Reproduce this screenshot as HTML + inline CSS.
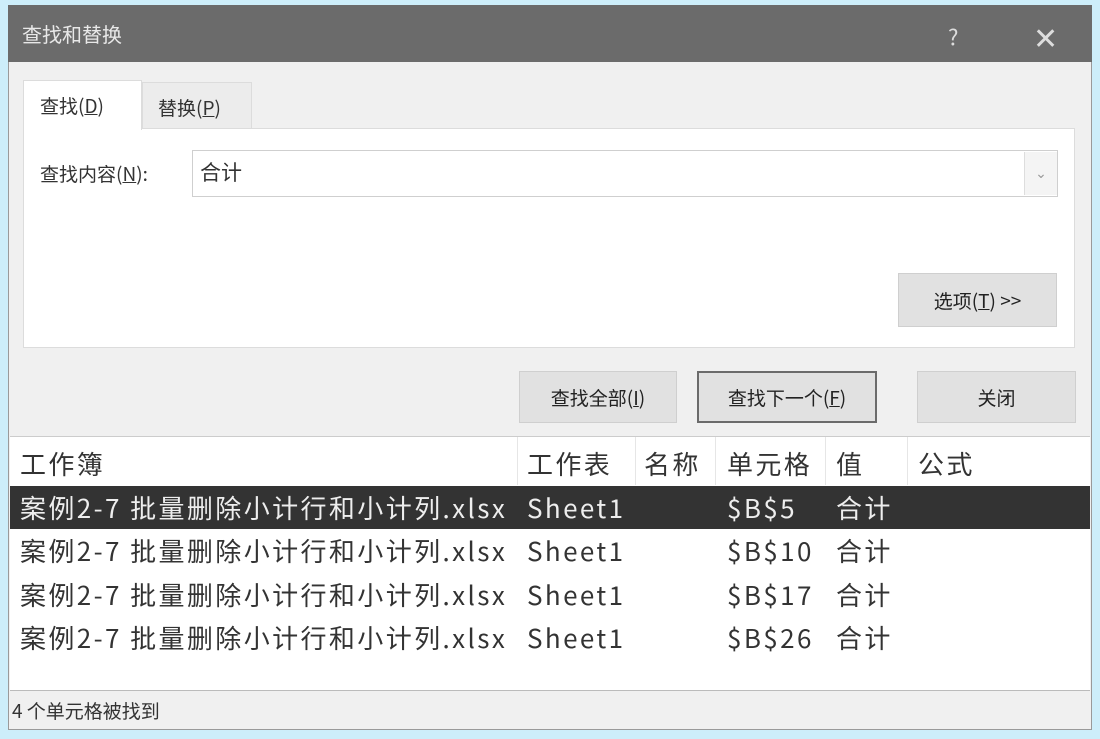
<!DOCTYPE html>
<html><head><meta charset="utf-8"><style>
body{margin:0;width:1100px;height:739px;background:#cdeefa;font-family:"Noto Sans CJK SC","Liberation Sans",sans-serif;position:relative;overflow:hidden}
.a{position:absolute;box-sizing:border-box}
.btn{background:#e1e1e1;border:1px solid #cfcfcf;font-size:19px;color:#222;display:flex;align-items:center;justify-content:center}
.row{position:absolute;left:10px;width:1080px;height:43px;font-size:26px;color:#333;line-height:43px}
.row span{position:absolute;top:0;white-space:nowrap;letter-spacing:2.4px}
</style></head><body>
<div class="a" style="left:8px;top:5px;width:1084px;height:725px;background:#f0f0f0;border:1px solid #9a9a9a"></div>
<div class="a" style="left:8px;top:5px;width:1084px;height:57px;background:#6b6b6b"></div>
<div class="a" style="left:22px;top:20px;font-size:20px;color:#e8e8e8;line-height:28px">查找和替换</div>
<div class="a" style="left:948px;top:20px;font-size:22px;color:#ddd">?</div>
<div class="a" style="left:1033px;top:14px;font-size:30px;color:#ddd">✕</div>
<div class="a" style="left:142px;top:82px;width:110px;height:47px;background:#ececec;border:1px solid #dcdcdc"></div>
<div class="a" style="left:23px;top:128px;width:1052px;height:220px;background:#fff;border:1px solid #dcdcdc"></div>
<div class="a" style="left:23px;top:80px;width:119px;height:50px;background:#fff;border:1px solid #dcdcdc;border-bottom:none"></div>
<div class="a" style="left:40px;top:92px;font-size:19px;color:#333">查找(<u>D</u>)</div>
<div class="a" style="left:158px;top:94px;font-size:19px;color:#333">替换(<u>P</u>)</div>
<div class="a" style="left:40px;top:160px;font-size:19px;color:#333">查找内容(<u>N</u>):</div>
<div class="a" style="left:192px;top:150px;width:866px;height:47px;background:#fff;border:1px solid #cfcfcf"></div>
<div class="a" style="left:200px;top:157px;font-size:21px;color:#333">合计</div>
<div class="a" style="left:1024px;top:152px;width:33px;height:43px;background:#f4f4f4;border-left:1px solid #ddd;color:#999;font-size:14px;text-align:center;line-height:43px">⌄</div>
<div class="a btn" style="left:898px;top:273px;width:159px;height:54px">选项(<u>T</u>) &gt;&gt;</div>
<div class="a btn" style="left:519px;top:371px;width:158px;height:52px">查找全部(<u>I</u>)</div>
<div class="a btn" style="left:697px;top:371px;width:180px;height:52px;border:2px solid #6b6b6b">查找下一个(<u>F</u>)</div>
<div class="a btn" style="left:917px;top:371px;width:159px;height:52px">关闭</div>
<div class="a" style="left:10px;top:436px;width:1080px;height:254px;background:#fff;border-top:1px solid #ccc"></div>
<div class="row" style="top:442px"><span style="left:10px">工作簿</span><span style="left:517px">工作表</span><span style="left:634px">名称</span><span style="left:717px">单元格</span><span style="left:826px">值</span><span style="left:908px">公式</span></div>
<div class="a" style="left:517px;top:437px;width:1px;height:48px;background:#e6e6e6"></div>
<div class="a" style="left:635px;top:437px;width:1px;height:48px;background:#e6e6e6"></div>
<div class="a" style="left:715px;top:437px;width:1px;height:48px;background:#e6e6e6"></div>
<div class="a" style="left:825px;top:437px;width:1px;height:48px;background:#e6e6e6"></div>
<div class="a" style="left:907px;top:437px;width:1px;height:48px;background:#e6e6e6"></div>
<div class="row" style="top:486px;background:#333;color:#eee"><span style="left:10px">案例2-7&nbsp;批量删除小计行和小计列.xlsx</span><span style="left:517px">Sheet1</span><span style="left:717px">$B$5</span><span style="left:826px">合计</span></div>
<div class="row" style="top:529px"><span style="left:10px">案例2-7&nbsp;批量删除小计行和小计列.xlsx</span><span style="left:517px">Sheet1</span><span style="left:717px">$B$10</span><span style="left:826px">合计</span></div>
<div class="row" style="top:573px"><span style="left:10px">案例2-7&nbsp;批量删除小计行和小计列.xlsx</span><span style="left:517px">Sheet1</span><span style="left:717px">$B$17</span><span style="left:826px">合计</span></div>
<div class="row" style="top:616px"><span style="left:10px">案例2-7&nbsp;批量删除小计行和小计列.xlsx</span><span style="left:517px">Sheet1</span><span style="left:717px">$B$26</span><span style="left:826px">合计</span></div>
<div class="a" style="left:10px;top:690px;width:1080px;height:1px;background:#bbb"></div>
<div class="a" style="left:12px;top:697px;font-size:19px;color:#333">4 个单元格被找到</div>
</body></html>
